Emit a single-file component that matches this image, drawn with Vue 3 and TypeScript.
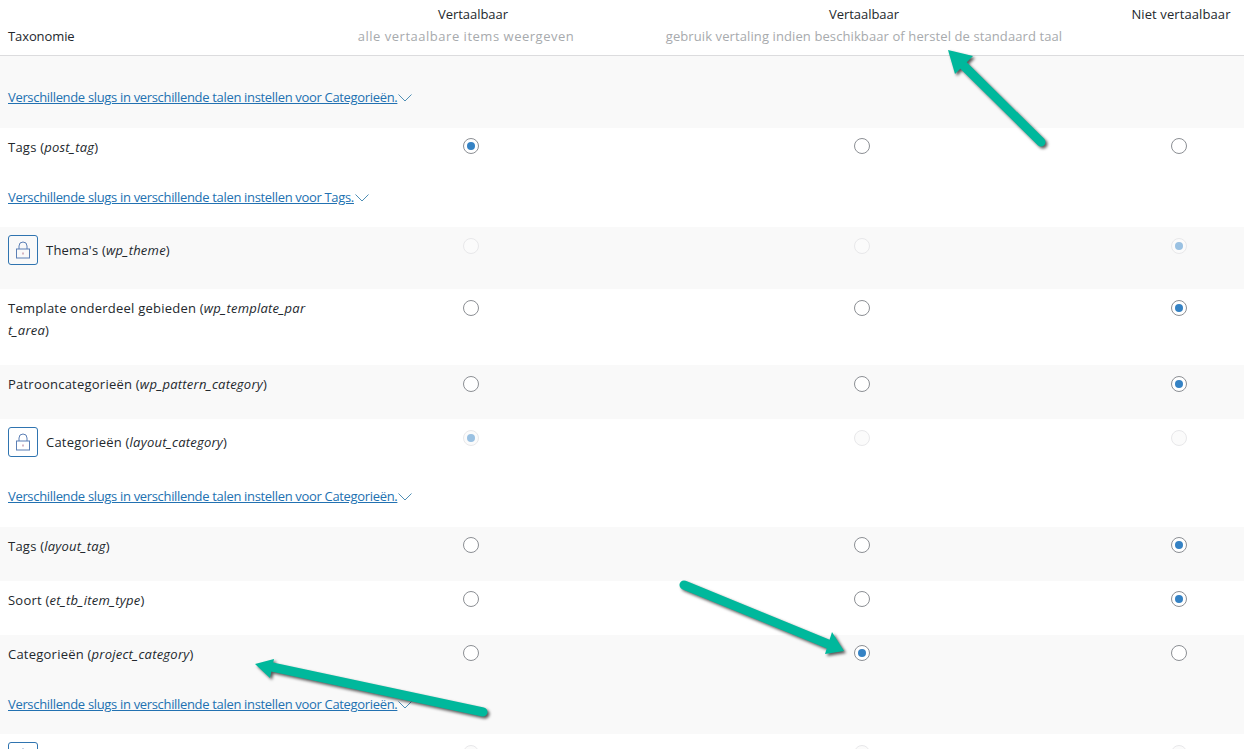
<script setup lang="ts">
type Kind = 'on' | 'off' | 'lock-on' | 'lock-off'
interface Row {
  name?: string
  slug?: string
  radios?: Kind[]
  locked?: boolean
  nudge?: boolean
  link?: string
  shade: boolean
  first?: boolean
}
const rows: Row[] = [
  { shade: true, first: true, link: 'Categorieën' },
  { shade: false, name: 'Tags', slug: 'post_tag', radios: ['on', 'off', 'off'], link: 'Tags' },
  { shade: true, name: "Thema's", slug: 'wp_theme', radios: ['lock-off', 'lock-off', 'lock-on'], locked: true, nudge: true },
  { shade: false, name: 'Template onderdeel gebieden', slug: 'wp_template_part_area', radios: ['off', 'off', 'on'], nudge: true },
  { shade: true, name: 'Patrooncategorieën', slug: 'wp_pattern_category', radios: ['off', 'off', 'on'], nudge: true },
  { shade: false, name: 'Categorieën', slug: 'layout_category', radios: ['lock-on', 'lock-off', 'lock-off'], locked: true, nudge: true, link: 'Categorieën' },
  { shade: true, name: 'Tags', slug: 'layout_tag', radios: ['off', 'off', 'on'] },
  { shade: false, name: 'Soort', slug: 'et_tb_item_type', radios: ['off', 'off', 'on'] },
  { shade: true, name: 'Categorieën', slug: 'project_category', radios: ['off', 'on', 'off'], link: 'Categorieën' },
  { shade: false, radios: ['lock-off', 'lock-off', 'lock-off'], locked: true, nudge: true },
]
const arrows = [
  { id: 'a', line: '1041,142 961,63', head: '948,50 973,56 955,74' },
  { id: 'b', line: '684,585 828,644', head: '844,651 825,654 832,632' },
  { id: 'c', line: '483,712 272,667', head: '255,664 274,659 270,678' },
]
</script>

<template>
  <div class="page">
    <div class="grid head">
      <div class="name-col tax">Taxonomie</div>
      <div class="col">
        <div class="label">Vertaalbaar</div>
        <div class="sub sub-a">alle vertaalbare items weergeven</div>
      </div>
      <div class="col">
        <div class="label">Vertaalbaar</div>
        <div class="sub sub-b">gebruik vertaling indien beschikbaar of herstel de standaard taal</div>
      </div>
      <div class="col label-wide">Niet vertaalbaar</div>
    </div>

    <div v-for="(row, i) in rows" :key="i" class="group" :class="{ shade: row.shade }">
      <div v-if="row.radios" class="grid row" :class="{ joined: row.link }">
        <div class="name-col name-cell" :class="{ locked: row.locked }">
          <span v-if="row.locked" class="lock">
            <svg width="16" height="18" viewBox="0 0 16 18" fill="none" stroke="#5b7fb5" stroke-width="1">
              <path d="M4 8V5a4 4 0 0 1 8 0v3" />
              <rect x="1.5" y="8" width="13" height="9" />
              <path d="M8 11.5v2" stroke="#b0708a" />
            </svg>
          </span>
          <span v-if="row.name" class="name">{{ row.name }} (<em>{{ row.slug }}</em>)</span>
        </div>
        <div v-for="(kind, k) in row.radios" :key="k" class="col">
          <span class="radio" :class="[kind, { nudge: row.nudge }]"></span>
        </div>
      </div>
      <div v-if="row.link" class="link-row" :class="{ 'link-first': row.first, 'link-locked': row.locked }">
        <a class="link">Verschillende slugs in verschillende talen instellen voor {{ row.link }}.</a>
        <svg class="chev" width="14" height="8" viewBox="0 0 14 8" fill="none" stroke="#4f8fb5" stroke-width="1">
          <path d="M0.5 0.5 7 7 13.5 0.5" />
        </svg>
      </div>
    </div>

    <svg class="arrows" width="1244" height="749" viewBox="0 0 1244 749">
      <g v-for="a in arrows" :key="a.id" class="arrow">
        <polyline :points="a.line" fill="none" stroke="#00b89c" stroke-width="9" stroke-linecap="round" />
        <polygon :points="a.head" fill="#00b89c" />
      </g>
    </svg>
  </div>
</template>

<style>
html, body { margin: 0; overflow: hidden; background: #fff; }
</style>

<style scoped>
.page {
  position: relative;
  width: 1244px;
  height: 749px;
  overflow: hidden;
  font-family: "Open Sans", "Noto Sans", sans-serif;
  font-size: 13px;
  line-height: 22px;
  color: #23282d;
  background: #fff;
}
.grid {
  display: grid;
  grid-template-columns: 341px 264px 518px 121px;
}
.head {
  height: 55px;
  border-bottom: 1px solid #dcdcde;
}
.head > .name-col { padding: 25px 0 0 8px; }
.head > .col { padding-top: 3px; white-space: nowrap; }
.tax { letter-spacing: -0.1px; }
.label { letter-spacing: -0.05px; }
.label-wide { letter-spacing: 0.1px; }
.col { display: flex; flex-direction: column; align-items: center; width: 116px; justify-self: start; }
.grid > .col:nth-child(2) { width: 264px; }
.grid > .col:nth-child(3) { width: 518px; }
.sub { color: #a7aaad; }
.sub-a { letter-spacing: 0.52px; transform: translateX(-7px); }
.sub-b { letter-spacing: 0.1px; }
.group { background: #fff; }
.group.shade { background: #f9f9f9; }
.row { padding: 8px 0 24px; }
.row.joined { padding-bottom: 16px; }
.name-col { box-sizing: border-box; }
.name-cell { display: flex; align-items: center; padding: 0 33px 0 8px; align-self: start; }
.name-cell.locked { min-height: 30px; }
.name { word-break: break-all; letter-spacing: 0.23px; }
.lock {
  box-sizing: border-box;
  flex: none;
  width: 30px;
  height: 30px;
  margin-right: 8px;
  border: 1px solid #2f74b0;
  border-radius: 3px;
  display: flex;
  align-items: center;
  justify-content: center;
}
.radio {
  display: block;
  box-sizing: border-box;
  width: 16px;
  height: 16px;
  margin: 2px 4px 0 0;
  border: 1px solid #8c8f94;
  border-radius: 50%;
  background: #fff;
  position: relative;
}
.radio.nudge { margin-top: 3px; }
.radio.on::after,
.radio.lock-on::after {
  content: "";
  position: absolute;
  left: 3px;
  top: 3px;
  width: 8px;
  height: 8px;
  border-radius: 50%;
  background: #3582c4;
}
.radio.lock-off,
.radio.lock-on {
  border-color: #e8e8ea;
  background: #fbfbfb;
}
.radio.lock-on::after { background: #9ac1e2; }
.link-row {
  display: flex;
  align-items: flex-start;
  height: 38px;
  padding: 12px 0 3px 8px;
  letter-spacing: -0.33px;
}
.link-row.link-locked { padding-bottom: 4px; }
.link-row.link-first { padding-top: 30px; padding-bottom: 4px; }
.link { color: #2271b1; text-decoration: underline; }
.chev { margin: 8px 0 0 1px; }
.arrows { position: absolute; left: 0; top: 0; pointer-events: none; }
.arrow { filter: drop-shadow(2px 2px 1.5px rgba(0, 0, 0, 0.65)); }
</style>
